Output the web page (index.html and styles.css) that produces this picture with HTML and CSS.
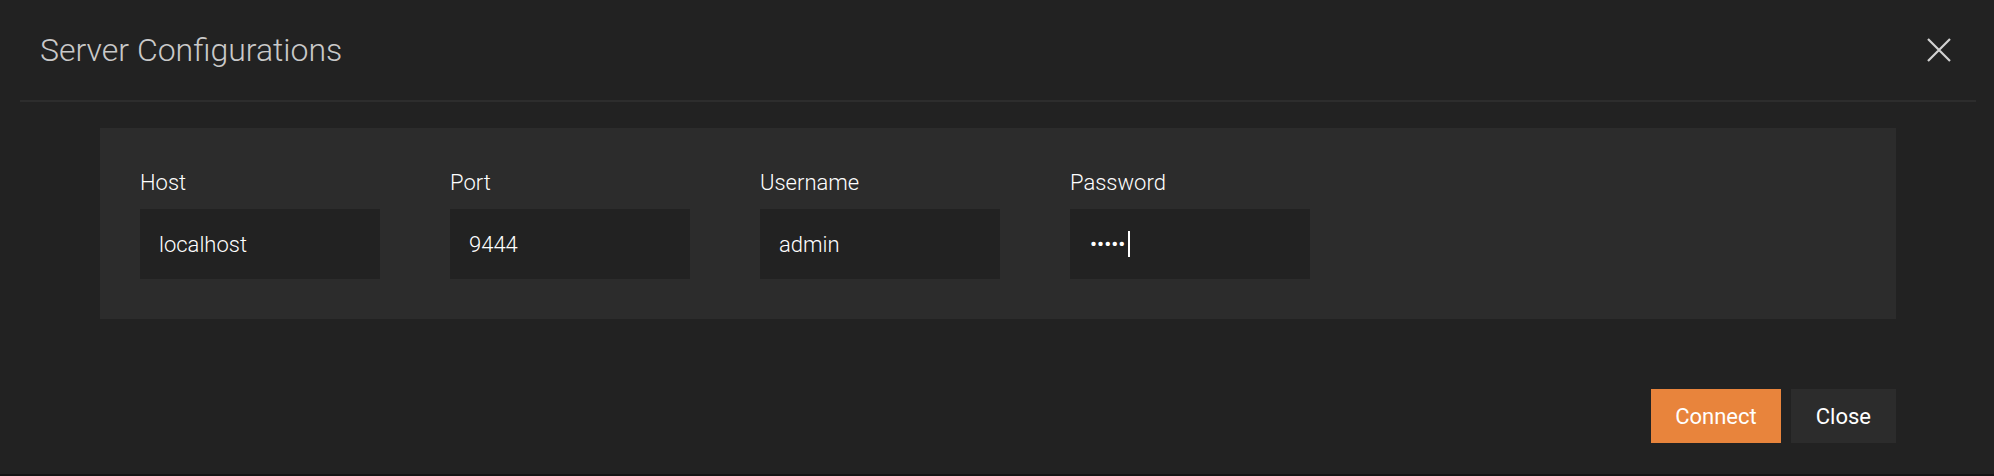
FILE: index.html
```html
<!DOCTYPE html>
<html lang="en">
<head>
<meta charset="utf-8">
<title>Server Configurations</title>
<link rel="stylesheet" href="styles.css">
</head>
<body>
<div class="modal">
  <header class="modal-header">
    <h1 class="modal-title">Server Configurations</h1>
    <button class="close-x" aria-label="Close">
      <svg width="24" height="24" viewBox="0 0 24 24"><path d="M1 1 L23 23 M23 1 L1 23" stroke="#d2d2d2" stroke-width="2.2" fill="none"/></svg>
    </button>
  </header>
  <div class="divider"></div>
  <section class="panel">
    <div class="field">
      <label class="label">Host</label>
      <div class="input">localhost</div>
    </div>
    <div class="field">
      <label class="label">Port</label>
      <div class="input">9444</div>
    </div>
    <div class="field">
      <label class="label">Username</label>
      <div class="input">admin</div>
    </div>
    <div class="field">
      <label class="label">Password</label>
      <div class="input"><span class="dots">•••••</span><span class="caret"></span></div>
    </div>
  </section>
  <footer class="modal-footer">
    <button class="btn btn-primary">Connect</button>
    <button class="btn btn-secondary">Close</button>
  </footer>
</div>
<div class="under-strip"></div>
</body>
</html>
```
FILE: styles.css
```css
html, body {
  margin: 0;
  padding: 0;
}
body {
  background: #222222;
  width: 1994px;
  height: 476px;
  overflow: hidden;
  font-family: Roboto, "Liberation Sans", sans-serif;
  display: flex;
  flex-direction: column;
}
.modal {
  flex: 1;
  display: flex;
  flex-direction: column;
}
.modal-header {
  height: 100px;
  display: flex;
  align-items: center;
  justify-content: space-between;
  padding: 0 43px 0 40px;
  box-sizing: border-box;
}
.modal-title {
  margin: 0;
  font-size: 32px;
  font-weight: 300;
  color: #c9c9c9;
  line-height: normal;
}
.close-x {
  background: none;
  border: 0;
  padding: 0;
  width: 24px;
  height: 24px;
  display: flex;
}
.divider {
  height: 2px;
  background: #2d2d2d;
  margin: 0 18px 0 20px;
}
.panel {
  margin: 26px 98px 0 100px;
  background: #2c2c2c;
  padding: 42px 40px 40px 40px;
  display: flex;
  gap: 70px;
}
.field {
  width: 240px;
  display: flex;
  flex-direction: column;
}
.label {
  font-size: 22px;
  font-weight: 300;
  color: #ffffff;
  line-height: normal;
  margin-bottom: 14px;
}
.input {
  height: 70px;
  background: #222222;
  padding: 0 19px;
  display: flex;
  align-items: center;
  font-size: 22px;
  font-weight: 300;
  color: #ffffff;
}
.dots {
  font-weight: 400;
  font-size: 21px;
  margin-left: 1px;
}
.caret {
  width: 2px;
  height: 26px;
  background: #ffffff;
  margin-left: 3px;
}
.modal-footer {
  display: flex;
  justify-content: flex-end;
  gap: 10px;
  margin: 70px 98px 0 0;
}
.btn {
  height: 54px;
  border: 0;
  font-family: Roboto, "Liberation Sans", sans-serif;
  font-size: 22px;
  color: #ffffff;
  padding: 0 24px;
}
.btn-primary {
  background: #e8843c;
}
.btn-secondary {
  background: #2c2c2c;
  padding: 0 25px;
}
.under-strip {
  height: 2px;
  background: #141414;
}
```
